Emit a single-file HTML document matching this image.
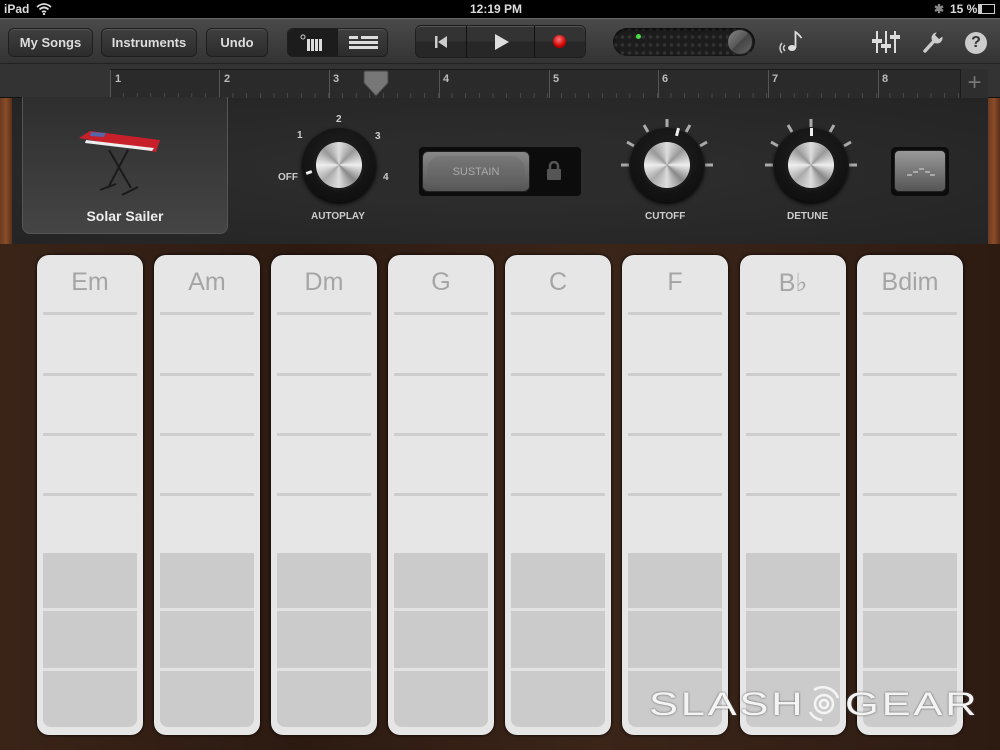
<!DOCTYPE html>
<html><head><meta charset="utf-8">
<style>
*{margin:0;padding:0;box-sizing:border-box}
body{width:1000px;height:750px;overflow:hidden;background:#2e1c13;font-family:"Liberation Sans",sans-serif;position:relative}
.abs{position:absolute}
#status{left:0;top:0;width:1000px;height:18px;background:#000;color:#ddd;font-size:12px;font-weight:bold}
#toolbar{left:0;top:18px;width:1000px;height:46px;background:linear-gradient(#4a4a4a,#333);border-top:1px solid #666;border-bottom:1px solid #222}
.btn{position:absolute;top:9px;height:29px;border-radius:6px;background:linear-gradient(#3f3f3f,#2c2c2c);border:1px solid #1e1e1e;box-shadow:inset 0 1px 0 #555;color:#ddd;font-size:13px;font-weight:bold;text-align:center;line-height:27px}
#ruler{left:0;top:64px;width:1000px;height:34px;background:#333;border-bottom:1px solid #111}
#rul{left:110px;top:5px;width:850px;height:29px;background:#2a2a2a;border-top:1px solid #1a1a1a;
background-image:repeating-linear-gradient(90deg,transparent 0,transparent 13px,#666 13px,#666 14px);background-size:13.7px 6px;background-repeat:repeat-x;background-position:0 23px}
.num{position:absolute;top:3px;color:#bbb;font-size:11px;font-weight:bold}
.bar{position:absolute;top:0;width:1px;height:29px;background:#555}
#panel{left:12px;top:98px;width:976px;height:146px;background:#272727;background-image:radial-gradient(#2c2c2c 30%,#242424 100%)}
.wood{background:linear-gradient(90deg,#6b3a1f,#8a4c2a,#5a2f18)}
.lbl{position:absolute;color:#ccc;font-size:10px;font-weight:bold}
.knob{position:absolute;width:74px;height:74px;border-radius:50%;background:radial-gradient(circle at 50% 40%,#222,#0a0a0a);box-shadow:0 2px 4px #000}
.knob i{position:absolute;left:14px;top:14px;width:46px;height:46px;border-radius:50%;background:conic-gradient(#ddd,#999,#eee,#888,#ddd,#aaa,#eee,#999,#ddd);box-shadow:0 0 0 3px #1a1a1a}
.strip{position:absolute;top:255px;width:106px;height:480px;border-radius:12px;background:#e6e6e6;box-shadow:0 0 3px #000}
.strip b{position:absolute;top:13px;left:0;width:100%;text-align:center;font-size:25px;font-weight:normal;color:#a5a5a5}
.strip .l{position:absolute;left:6px;right:6px;height:3px;background:#cdcdcd}
.strip .g{position:absolute;left:6px;right:6px;top:298px;height:174px;border-radius:0 0 8px 8px;background:#cbcbcb}
.strip .g .w{position:absolute;left:0;right:0;height:3px;background:#e2e2e2}
.wm{position:absolute;top:686px;color:#f4f4f4;font-size:32px;text-shadow:0 0 2px #555;white-space:nowrap;transform-origin:0 0;transform:scaleX(1.36);letter-spacing:2px}
</style></head><body>
<div id="status" class="abs">
 <span class="abs" style="left:4px;top:2px">iPad</span>
 <svg class="abs" style="left:36px;top:3px" width="16" height="12" viewBox="0 0 16 12"><path d="M1 4Q8-2 15 4M3.5 6.5Q8 2.5 12.5 6.5M6 9Q8 7.5 10 9" stroke="#ddd" stroke-width="1.8" fill="none"/><circle cx="8" cy="11" r="1.2" fill="#ddd"/></svg>
 <span class="abs" style="left:470px;top:2px">12:19 PM</span>
 <span class="abs" style="left:934px;top:2px;color:#888">&#x2731;</span>
 <span class="abs" style="left:950px;top:2px">15 %</span>
 <div class="abs" style="left:978px;top:4px;width:17px;height:10px;border:1px solid #ccc"><div style="width:3px;height:8px;background:#ccc"></div></div>
</div>
<div id="toolbar" class="abs">
 <div class="btn" style="left:8px;width:85px">My Songs</div>
 <div class="btn" style="left:101px;width:96px">Instruments</div>
 <div class="btn" style="left:206px;width:62px">Undo</div>
 <div class="btn" style="left:287px;width:101px;padding:0">
  <div class="abs" style="left:0;top:0;width:50px;height:27px;background:#1c1c1c;border-radius:5px 0 0 5px"></div>
  <svg class="abs" style="left:11px;top:5px" width="26" height="18"><circle cx="4" cy="3" r="2" fill="none" stroke="#ccc"/><g fill="#ddd"><rect x="8" y="5" width="3" height="12"/><rect x="12" y="5" width="3" height="12"/><rect x="16" y="5" width="3" height="12"/><rect x="20" y="5" width="3" height="12"/></g></svg>
  <svg class="abs" style="left:61px;top:7px" width="30" height="14" fill="#ddd"><rect x="0" y="0" width="9" height="3"/><rect x="12" y="0" width="17" height="3"/><rect x="0" y="5" width="29" height="3"/><rect x="0" y="10" width="29" height="3"/></svg>
 </div>
 <div class="btn" style="left:415px;width:171px;top:6px;height:33px;background:linear-gradient(#333 50%,#272727 50%)">
  <div class="abs" style="left:50px;top:0;width:1px;height:31px;background:#111"></div>
  <div class="abs" style="left:118px;top:0;width:1px;height:31px;background:#111"></div>
  <svg class="abs" style="left:19px;top:10px" width="14" height="12" fill="#ccc"><rect x="0" y="0" width="2.5" height="12"/><path d="M3 6L12 0V12Z"/></svg>
  <svg class="abs" style="left:78px;top:8px" width="16" height="16" fill="#ddd"><path d="M1 0L15 8L1 16Z"/></svg>
  <div class="abs" style="left:137px;top:9px;width:13px;height:13px;border-radius:50%;background:radial-gradient(circle at 45% 35%,#f77,#c00 60%,#700)"></div>
 </div>
 <div class="abs" style="left:613px;top:9px;width:142px;height:28px;border-radius:14px;background:#1c1c1c;box-shadow:inset 0 1px 3px #000;
 background-image:radial-gradient(circle,#333 1.5px,transparent 2px);background-size:7px 8px;background-position:6px 5px">
  <div class="abs" style="left:23px;top:6px;width:5px;height:5px;border-radius:50%;background:#4d4"></div>
  <div class="abs" style="left:114px;top:1px;width:26px;height:26px;border-radius:50%;background:linear-gradient(135deg,#888,#555 50%,#444 50%,#666);border:1px solid #222"></div>
 </div>
 <svg class="abs" style="left:778px;top:9px" width="26" height="28"><path d="M7 17q-3 3 0 6M4 15q-4 5 0 10" stroke="#ccc" stroke-width="1.5" fill="none"/><ellipse cx="14" cy="20" rx="4" ry="3" fill="#ddd"/><path d="M17.5 20V4q3 2 6 6" stroke="#ddd" stroke-width="1.8" fill="none"/></svg>
 <svg class="abs" style="left:872px;top:12px" width="28" height="22" fill="#ddd"><rect x="4" y="0" width="2" height="22"/><rect x="0" y="8" width="10" height="4"/><rect x="13" y="0" width="2" height="22"/><rect x="9" y="13" width="10" height="4"/><rect x="22" y="0" width="2" height="22"/><rect x="18" y="4" width="10" height="4"/></svg>
 <svg class="abs" style="left:922px;top:11px" width="22" height="24"><path d="M3 21L13 10" stroke="#ccc" stroke-width="3.5" stroke-linecap="round"/><circle cx="15" cy="8" r="5.5" fill="#ccc"/><path d="M16 1L21 6L17 9L13 5Z" fill="#383838"/></svg>
 <div class="abs" style="left:965px;top:13px;width:22px;height:22px;border-radius:50%;background:#ccc;color:#333;font-weight:bold;font-size:16px;text-align:center;line-height:22px">?</div>
</div>
<div id="ruler" class="abs">
 <div id="rul" class="abs">
  <div class="bar" style="left:0"></div><div class="bar" style="left:109px"></div><div class="bar" style="left:219px"></div><div class="bar" style="left:329px"></div><div class="bar" style="left:439px"></div><div class="bar" style="left:548px"></div><div class="bar" style="left:658px"></div><div class="bar" style="left:768px"></div>
  <span class="num" style="left:5px">1</span><span class="num" style="left:114px">2</span><span class="num" style="left:223px">3</span><span class="num" style="left:333px">4</span><span class="num" style="left:443px">5</span><span class="num" style="left:552px">6</span><span class="num" style="left:662px">7</span><span class="num" style="left:772px">8</span>
 </div>
 <svg class="abs" style="left:362px;top:6px" width="28" height="28"><path d="M2 3Q2 1 4 1H24Q26 1 26 3V13L14 26L2 13Z" fill="#777" stroke="#444"/></svg>
 <div class="abs" style="left:960px;top:5px;width:28px;height:29px;background:#2e2e2e;border-left:1px solid #1a1a1a;color:#777;font-size:24px;text-align:center;line-height:28px">+</div>
</div>
<div class="abs wood" style="left:0;top:98px;width:12px;height:146px"></div>
<div class="abs wood" style="left:988px;top:98px;width:12px;height:146px"></div>
<div id="panel" class="abs"></div>
<div class="abs" style="left:22px;top:97px;width:206px;height:137px;border-radius:0 0 8px 8px;background:linear-gradient(#2e2e2e,#454545);border:1px solid #555;border-top:none"></div>
<svg class="abs" style="left:76px;top:128px" width="90" height="70"><path d="M33 22L55 60M52 22L32 60M24 62L40 56M46 67L62 59" stroke="#1a1a1a" stroke-width="2"/><path d="M3 10L14 3L84 12L80 24Z" fill="#c8202a"/><path d="M10 12L78 20L76 23L9 15Z" fill="#eee"/><path d="M15 4L30 5L28 9L14 8Z" fill="#5566aa"/></svg>
<div class="abs" style="left:22px;top:208px;width:206px;text-align:center;color:#eee;font-size:14px;font-weight:bold">Solar Sailer</div>
<span class="lbl" style="left:336px;top:114px">2</span><span class="lbl" style="left:297px;top:130px">1</span><span class="lbl" style="left:375px;top:131px">3</span><span class="lbl" style="left:278px;top:172px">OFF</span><span class="lbl" style="left:383px;top:172px">4</span>
<div class="knob" style="left:302px;top:128px"><i></i></div>
<div class="abs" style="left:306px;top:171px;width:6px;height:3px;background:#eee;transform:rotate(-20deg)"></div>
<span class="lbl" style="left:311px;top:211px">AUTOPLAY</span>
<div class="abs" style="left:419px;top:147px;width:162px;height:49px;background:#0c0c0c;border-radius:4px"></div>
<div class="abs" style="left:422px;top:151px;width:108px;height:41px;border-radius:6px;background:linear-gradient(#888,#555);border:1px solid #222"><div style="position:absolute;left:4px;top:4px;right:4px;bottom:4px;border-radius:14px;background:linear-gradient(#777,#5c5c5c);color:#aaa;font-size:11px;text-align:center;line-height:32px">SUSTAIN</div></div>
<svg class="abs" style="left:546px;top:161px" width="16" height="20" fill="#555"><rect x="1" y="8" width="14" height="11" rx="1"/><path d="M4 8V5a4 4 0 0 1 8 0V8" stroke="#555" stroke-width="2.5" fill="none"/></svg>
<svg class="abs" style="left:610px;top:110px" width="260" height="100" stroke="#aaa" stroke-width="3">
 <g transform="translate(57,55)"><path d="M-46 0H-38M38 0H46M-40-23L-33-19M40-23L33-19M-23-40L-19-33M23-40L19-33M0-46V-38"/></g>
 <g transform="translate(201,55)"><path d="M-46 0H-38M38 0H46M-40-23L-33-19M40-23L33-19M-23-40L-19-33M23-40L19-33M0-46V-38"/></g>
</svg>
<div class="knob" style="left:630px;top:128px"><i></i></div>
<div class="knob" style="left:774px;top:128px"><i></i></div>
<div class="abs" style="left:676px;top:128px;width:3px;height:8px;background:#eee;transform:rotate(15deg)"></div>
<div class="abs" style="left:810px;top:128px;width:3px;height:8px;background:#eee"></div>
<span class="lbl" style="left:645px;top:211px">CUTOFF</span>
<span class="lbl" style="left:787px;top:211px">DETUNE</span>
<div class="abs" style="left:891px;top:147px;width:58px;height:49px;border-radius:5px;background:#0c0c0c"></div>
<div class="abs" style="left:894px;top:150px;width:52px;height:42px;border-radius:5px;background:linear-gradient(#999,#555);border:1px solid #222">
 <svg class="abs" style="left:12px;top:14px" width="28" height="14" fill="#aaa"><rect x="0" y="9" width="5" height="2"/><rect x="6" y="6" width="5" height="2"/><rect x="12" y="3" width="5" height="2"/><rect x="18" y="6" width="5" height="2"/><rect x="23" y="9" width="5" height="2"/></svg>
</div>
<div class="abs" style="left:0;top:244px;width:1000px;height:506px;background:linear-gradient(90deg,#3a2418,#2c1a11 30%,#3b2519 60%,#2d1b12);"></div>

<div class="strip" style="left:37px"><b>Em</b><div class="l" style="top:57px"></div><div class="l" style="top:118px"></div><div class="l" style="top:178px"></div><div class="l" style="top:238px"></div><div class="g"><div class="w" style="top:55px"></div><div class="w" style="top:115px"></div></div></div>
<div class="strip" style="left:154px"><b>Am</b><div class="l" style="top:57px"></div><div class="l" style="top:118px"></div><div class="l" style="top:178px"></div><div class="l" style="top:238px"></div><div class="g"><div class="w" style="top:55px"></div><div class="w" style="top:115px"></div></div></div>
<div class="strip" style="left:271px"><b>Dm</b><div class="l" style="top:57px"></div><div class="l" style="top:118px"></div><div class="l" style="top:178px"></div><div class="l" style="top:238px"></div><div class="g"><div class="w" style="top:55px"></div><div class="w" style="top:115px"></div></div></div>
<div class="strip" style="left:388px"><b>G</b><div class="l" style="top:57px"></div><div class="l" style="top:118px"></div><div class="l" style="top:178px"></div><div class="l" style="top:238px"></div><div class="g"><div class="w" style="top:55px"></div><div class="w" style="top:115px"></div></div></div>
<div class="strip" style="left:505px"><b>C</b><div class="l" style="top:57px"></div><div class="l" style="top:118px"></div><div class="l" style="top:178px"></div><div class="l" style="top:238px"></div><div class="g"><div class="w" style="top:55px"></div><div class="w" style="top:115px"></div></div></div>
<div class="strip" style="left:622px"><b>F</b><div class="l" style="top:57px"></div><div class="l" style="top:118px"></div><div class="l" style="top:178px"></div><div class="l" style="top:238px"></div><div class="g"><div class="w" style="top:55px"></div><div class="w" style="top:115px"></div></div></div>
<div class="strip" style="left:740px"><b>B♭</b><div class="l" style="top:57px"></div><div class="l" style="top:118px"></div><div class="l" style="top:178px"></div><div class="l" style="top:238px"></div><div class="g"><div class="w" style="top:55px"></div><div class="w" style="top:115px"></div></div></div>
<div class="strip" style="left:857px"><b>Bdim</b><div class="l" style="top:57px"></div><div class="l" style="top:118px"></div><div class="l" style="top:178px"></div><div class="l" style="top:238px"></div><div class="g"><div class="w" style="top:55px"></div><div class="w" style="top:115px"></div></div></div>

<div class="wm" style="left:649px">SLASH</div>
<div class="wm" style="left:845px">GEAR</div>
<svg class="abs" style="left:806px;top:686px" width="36" height="36" fill="none" stroke="#f4f4f4" stroke-width="2.5"><circle cx="18" cy="18" r="4"/><circle cx="18" cy="18" r="9"/><path d="M8 4A16 16 0 0 1 32 12M4 26A16 16 0 0 0 16 34"/></svg>
</body></html>
